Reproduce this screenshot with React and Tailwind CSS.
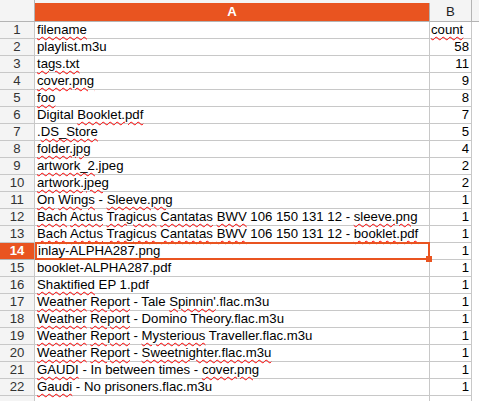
import React from 'react'

// *word* = spell-check squiggle
const rows = [
  ['*filename*', '*count*'],
  ['playlist.m3u', 58],
  ['*tags.txt*', 11],
  ['*cover.png*', 9],
  ['*foo*', 8],
  ['Digital *Booklet.pdf*', 7],
  ['.*DS_Store*', 5],
  ['*folder.jpg*', 4],
  ['*artwork_2*.jpeg', 2],
  ['*artwork.jpeg*', 2],
  ['*On* *Wings* - *Sleeve.png*', 1],
  ['*Bach* *Actus* *Tragicus* *Cantatas* *BWV* 106 150 131 12 - *sleeve.png*', 1],
  ['*Bach* *Actus* *Tragicus* *Cantatas* *BWV* 106 150 131 12 - *booklet.pdf*', 1],
  ['inlay-ALPHA287.png', 1],
  ['booklet-ALPHA287.pdf', 1],
  ['*Shaktified* EP 1.pdf', 1],
  ["*Weather* *Report* - Tale *Spinnin'*.flac.m3u", 1],
  ['*Weather* *Report* - Domino Theory.flac.m3u', 1],
  ['*Weather* *Report* - *Mysterious* Traveller.flac.m3u', 1],
  ['*Weather* *Report* - *Sweetnighter.flac.m3u*', 1],
  ['*GAUDI* - In between times - *cover.png*', 1],
  ['*Gaudi* - No prisoners.flac.m3u', 1],
  ['', ''],
]

function Squiggle({ text }) {
  return text.split('*').map((part, i) =>
    i % 2 === 1 ? (
      <span key={i} className="underline decoration-wavy decoration-[#ff0000] decoration-1 underline-offset-[2px]">
        {part}
      </span>
    ) : (
      <span key={i}>{part}</span>
    )
  )
}

export default function App() {
  const active = 14
  return (
    <div className="w-[479px] h-[401px] overflow-hidden bg-white text-[13.2px] text-black" style={{ fontFamily: '"Liberation Sans", Arial, sans-serif' }}>
      {/* column headers */}
      <div className="flex h-[22px] border-b border-[#b4b4b4] bg-[#f4f4f4]">
        <div className="w-[35px] shrink-0 border-r border-[#b4b4b4]" />
        <div className="w-[395px] shrink-0 mt-[3px] bg-[#e95420] border-r border-[#b4b4b4] flex items-center justify-center text-white font-bold">
          A
        </div>
        <div className="w-[42px] shrink-0 border-r border-[#b4b4b4] flex items-center justify-center pt-[2px] text-[#222]">
          B
        </div>
        <div className="flex-1" />
      </div>

      {rows.map(([name, count], i) => {
        const n = i + 1
        const isActive = n === active
        const last = n === rows.length
        return (
          <div key={n} className="flex h-[17px] leading-[16px]">
            <div
              className={
                isActive
                  ? 'w-[35px] shrink-0 border-r border-b border-[#b4b4b4] bg-[#e95420] text-white font-bold flex items-center justify-center'
                  : 'w-[35px] shrink-0 border-r border-b border-[#c8c8c8] bg-[#f4f4f4] text-[#333] flex items-center justify-center'
              }
            >
              {last ? '' : n}
            </div>
            <div
              className={
                isActive
                  ? 'relative w-[395px] shrink-0 border-2 border-[#e95420] -mt-px h-[18px] pl-px whitespace-nowrap leading-[14px]'
                  : 'w-[395px] shrink-0 border-r border-b border-[#c8c8c8] pl-[2px] whitespace-nowrap'
              }
            >
              <Squiggle text={name} />
              {isActive && (
                <span className="absolute -right-[4px] -bottom-[4px] w-[6px] h-[6px] bg-[#e95420]" />
              )}
            </div>
            <div className="w-[42px] shrink-0 border-r border-b border-[#c8c8c8] pr-[2px] text-right whitespace-nowrap">
              {typeof count === 'string' ? <span className="block text-left pl-px"><Squiggle text={count} /></span> : count}
            </div>
            <div className="flex-1" />
          </div>
        )
      })}
    </div>
  )
}
